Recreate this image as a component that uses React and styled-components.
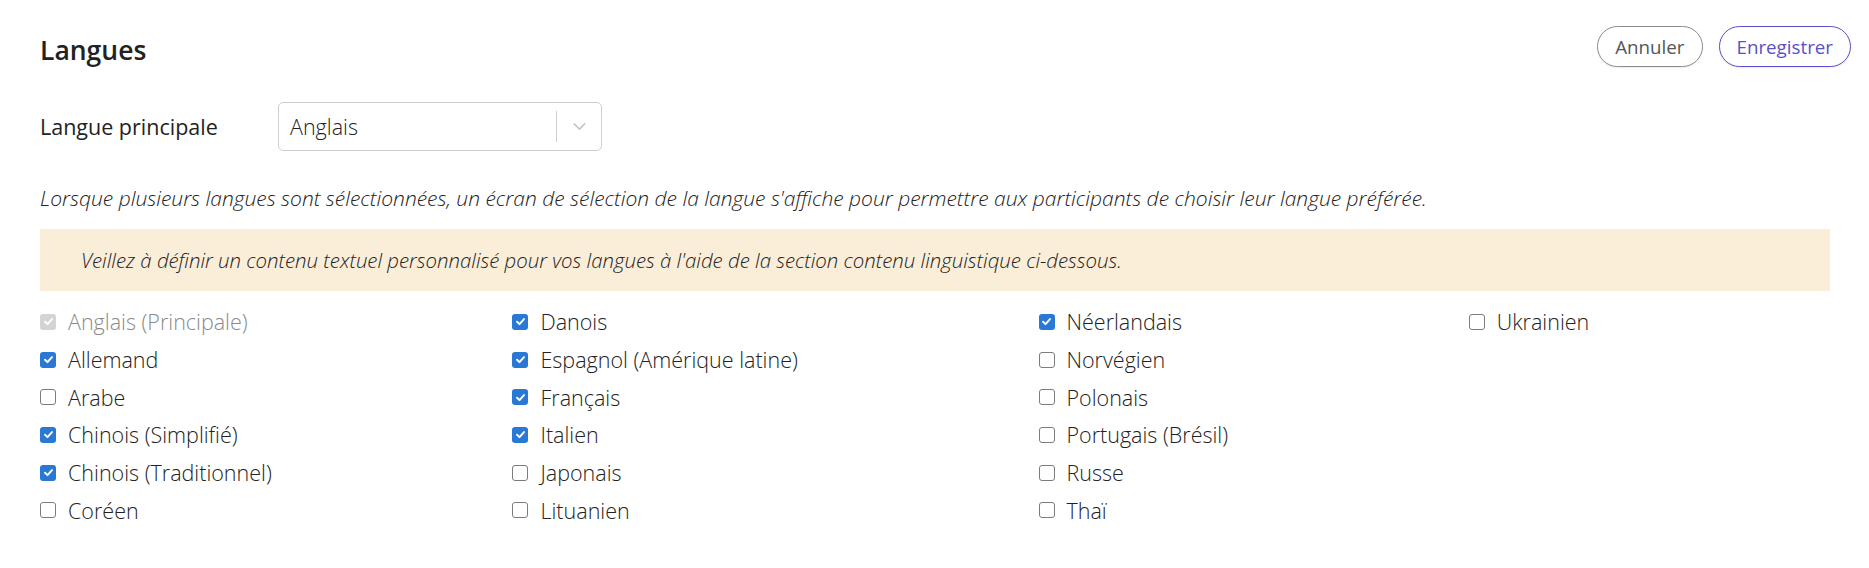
import React from 'react';
import styled, { createGlobalStyle } from 'styled-components';
import { ChevronDown } from 'lucide-react';

const GlobalStyle = createGlobalStyle`
    body {
        margin: 0;
        background: #fff;
        font-family: "Open Sans", "Liberation Sans", sans-serif;
        color: #2b2b2b;
    }
`;

const columns = [
    [
        { name: 'Anglais (Principale)', checked: true, disabled: true },
        { name: 'Allemand', checked: true },
        { name: 'Arabe' },
        { name: 'Chinois (Simplifié)', checked: true },
        { name: 'Chinois (Traditionnel)', checked: true },
        { name: 'Coréen' },
    ],
    [
        { name: 'Danois', checked: true },
        { name: 'Espagnol (Amérique latine)', checked: true },
        { name: 'Français', checked: true },
        { name: 'Italien', checked: true },
        { name: 'Japonais' },
        { name: 'Lituanien' },
    ],
    [
        { name: 'Néerlandais', checked: true },
        { name: 'Norvégien' },
        { name: 'Polonais' },
        { name: 'Portugais (Brésil)' },
        { name: 'Russe' },
        { name: 'Thaï' },
    ],
    [
        { name: 'Ukrainien' },
    ],
]

const CheckBox = ({ checked, disabled }) => (
    <Box $checked={checked} $disabled={disabled}>
        {checked &&
            <svg width="11" height="11" viewBox="0 0 12 12">
                <path d="M2.2 6.3 L4.9 8.9 L9.8 3.3" fill="none" stroke="#fff" strokeWidth="2.1" strokeLinecap="round" strokeLinejoin="round" />
            </svg>}
    </Box>
)

const App = () => {
    return (
        <Page>
            <GlobalStyle />
            <Header>
                <Title>Langues</Title>
                <Buttons>
                    <Button>Annuler</Button>
                    <Button $primary>Enregistrer</Button>
                </Buttons>
            </Header>
            <Content>
                <FieldRow>
                    <FieldLabel>Langue principale</FieldLabel>
                    <Select>
                        <SelectValue>Anglais</SelectValue>
                        <Separator />
                        <Chevron>
                            <ChevronDown size={21} strokeWidth={1.7} color="#c4c4c4" />
                        </Chevron>
                    </Select>
                </FieldRow>
                <Hint>Lorsque plusieurs langues sont sélectionnées, un écran de sélection de la langue s'affiche pour permettre aux participants de choisir leur langue préférée.</Hint>
                <Warning>Veillez à définir un contenu textuel personnalisé pour vos langues à l'aide de la section contenu linguistique ci-dessous.</Warning>
                <Grid>
                    {columns.map((col, i) =>
                        <Column key={i}>
                            {col.map(item =>
                                <Option key={item.name} $disabled={item.disabled}>
                                    <CheckBox checked={item.checked} disabled={item.disabled} />
                                    {item.name}
                                </Option>
                            )}
                        </Column>
                    )}
                </Grid>
            </Content>
        </Page>
    )
}

export default App

const Page = styled.div`
    width: 1869px;
    padding: 26px 18px 40px 40px;
    box-sizing: border-box;
`;

const Header = styled.div`
    display: flex;
    justify-content: space-between;
    align-items: center;
    height: 41px;
`;

const Title = styled.h2`
    margin: 0;
    font-size: 26.5px;
    font-weight: 600;
    color: #222;
    position: relative;
    top: 3px;
`;

const Buttons = styled.div`
    display: flex;
    gap: 16px;
`;

const Button = styled.button`
    height: 41px;
    padding: 0 17px;
    border-radius: 21px;
    background: #fff;
    border: 1px solid ${p => p.$primary ? '#5a4fc8' : '#8c8c8c'};
    color: ${p => p.$primary ? '#5a4fc8' : '#555'};
    font-family: "Open Sans", sans-serif;
    font-size: 18.75px;
    box-shadow: 0 1px 2px rgba(0, 0, 0, 0.08);
    cursor: pointer;
`;

const Content = styled.div`
    width: 1790px;
`;

const FieldRow = styled.div`
    display: flex;
    align-items: center;
    margin-top: 35px;
`;

const FieldLabel = styled.div`
    width: 238px;
    font-size: 21.5px;
    color: #222;
`;

const Select = styled.div`
    display: flex;
    align-items: center;
    width: 324px;
    height: 49px;
    box-sizing: border-box;
    border: 1px solid #cfcfcf;
    border-radius: 5px;
    padding-left: 11px;
`;

const SelectValue = styled.div`
    flex: 1;
    font-size: 21.5px;
    font-weight: 300;
    color: #222;
`;

const Separator = styled.div`
    width: 1px;
    height: 31px;
    background: #cfcfcf;
`;

const Chevron = styled.div`
    display: flex;
    align-items: center;
    justify-content: center;
    width: 44px;
`;

const Hint = styled.p`
    margin: 33px 0 0;
    font-size: 21px;
    line-height: 28px;
    font-weight: 300;
    font-style: italic;
    color: #222;
`;

const Warning = styled.div`
    margin-top: 17px;
    height: 62px;
    display: flex;
    align-items: center;
    padding-left: 41px;
    background: #faeed9;
    font-size: 20.4px;
    font-weight: 300;
    font-style: italic;
    color: #222;
`;

const Grid = styled.div`
    display: flex;
    margin-top: 12px;
`;

const Column = styled.div`
    flex: 1 1 auto;
    display: flex;
    flex-direction: column;
`;

const Option = styled.label`
    display: flex;
    align-items: center;
    gap: 12px;
    height: 37.7px;
    font-size: 21.5px;
    font-weight: 300;
    color: ${p => p.$disabled ? '#8a8a8a' : '#222'};
    white-space: nowrap;
`;

const Box = styled.span`
    display: flex;
    align-items: center;
    justify-content: center;
    width: 16px;
    height: 16px;
    box-sizing: border-box;
    border-radius: 3px;
    flex-shrink: 0;
    background: ${p => p.$disabled ? '#d4d4d4' : p.$checked ? '#2a78d6' : '#fff'};
    border: ${p => p.$checked ? 'none' : '1.5px solid #7c7c7c'};
`;
